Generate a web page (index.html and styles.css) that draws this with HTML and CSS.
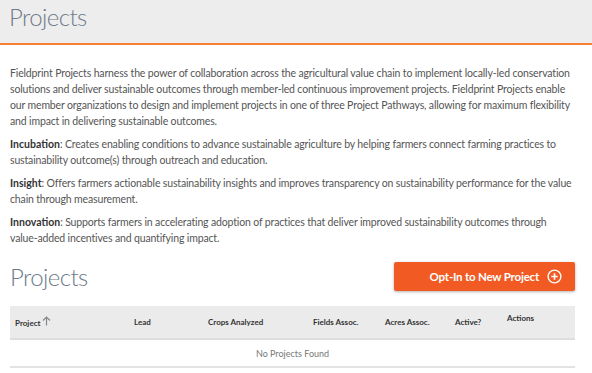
FILE: index.html
```html
<!DOCTYPE html>
<html>
<head>
  <title>Projects</title>
  <link rel="stylesheet" href="styles.css">
</head>
<body>
  <div class="page-header">
    <h1>Projects</h1>
  </div>

  <div class="content">
    <p>Fieldprint Projects harness the power of collaboration across the agricultural value chain to implement locally-led conservation solutions and deliver sustainable outcomes through member-led continuous improvement projects. Fieldprint Projects enable our member organizations to design and implement projects in one of three Project Pathways, allowing for maximum flexibility and impact in delivering sustainable outcomes.</p>
    <p><strong>Incubation</strong>: Creates enabling conditions to advance sustainable agriculture by helping farmers connect farming practices to sustainability outcome(s) through outreach and education.</p>
    <p><strong>Insight</strong>: Offers farmers actionable sustainability insights and improves transparency on sustainability performance for the value chain through measurement.</p>
    <p><strong>Innovation</strong>: Supports farmers in accelerating adoption of practices that deliver improved sustainability outcomes through value&#8209;added incentives and quantifying impact.</p>

    <div class="section-head">
      <h2>Projects</h2>
      <button class="btn-optin">Opt-In to New Project
        <svg width="15" height="15" viewBox="0 0 16 16">
          <circle cx="8" cy="8" r="6.8" fill="none" stroke="#fff" stroke-width="1.5"/>
          <path d="M8 4.6v6.8M4.6 8h6.8" stroke="#fff" stroke-width="1.7"/>
        </svg>
      </button>
    </div>

    <table class="projects">
      <thead>
        <tr>
          <th class="col-project">Project
            <svg width="9" height="10" viewBox="0 0 9 10">
              <path d="M4.5 9.5V1.2M1 4.5l3.5-3.5 3.5 3.5" fill="none" stroke="#888" stroke-width="1.2"/>
            </svg>
          </th>
          <th class="col-lead">Lead</th>
          <th class="col-crops">Crops Analyzed</th>
          <th class="col-fields">Fields Assoc.</th>
          <th class="col-acres">Acres Assoc.</th>
          <th class="col-active">Active?</th>
          <th class="col-actions">Actions</th>
        </tr>
      </thead>
      <tbody>
        <tr>
          <td colspan="7" class="empty">No Projects Found</td>
        </tr>
      </tbody>
    </table>
  </div>
</body>
</html>
```

FILE: styles.css
```css
body {
  margin: 0;
  font-family: Lato, "Open Sans", sans-serif;
  color: #555;
  background-color: white;
}
.page-header {
  background-color: #ededed;
  border-bottom: 2px solid #f58035;
  height: 43px;
  padding: 0 9px;
}
.page-header h1 {
  margin: 0;
  padding-top: 2px;
  font-size: 24px;
  font-weight: 300;
  letter-spacing: -0.6px;
  color: #6d7b8a;
}
.content {
  padding: 20px 17px 0 10px;
}
p {
  margin: 0 0 7px;
  font-size: 10.5px;
  letter-spacing: -0.15px;
  line-height: 16px;
}
strong {
  color: #333;
  letter-spacing: 0;
}
.section-head {
  display: flex;
  justify-content: space-between;
  align-items: center;
  margin-top: 16px;
}
h2 {
  margin: 0;
  font-size: 24px;
  font-weight: 300;
  letter-spacing: -0.6px;
  color: #6d7b8a;
}
.btn-optin {
  display: flex;
  align-items: center;
  gap: 8px;
  background-color: #f15a22;
  color: white;
  border: none;
  border-radius: 2px;
  height: 29px;
  padding: 0 13px 0 36px;
  font-family: inherit;
  font-size: 11.5px;
  font-weight: 700;
  letter-spacing: -0.2px;
  box-shadow: 0 1px 3px rgba(0,0,0,0.3);
}
.projects {
  width: 100%;
  margin-top: 15px;
  border-collapse: collapse;
}
.projects th {
  background-color: #ebebeb;
  border-bottom: 2px solid #dedede;
  height: 25px;
  font-size: 8px;
  font-weight: 700;
  color: #333;
  text-align: left;
  padding: 0 5px;
}
.col-project { width: 109px; }
.col-lead { width: 64px; }
.col-crops { width: 95px; }
.col-fields { width: 62px; }
.col-acres { width: 60px; }
.col-active { width: 42px; }
.col-actions { vertical-align: top; padding-top: 7px !important; }
.projects td {
  border-bottom: 2px solid #e3e3e3;
  height: 24px;
}
.empty {
  text-align: center;
  font-size: 9px;
  color: #777;
}
```
